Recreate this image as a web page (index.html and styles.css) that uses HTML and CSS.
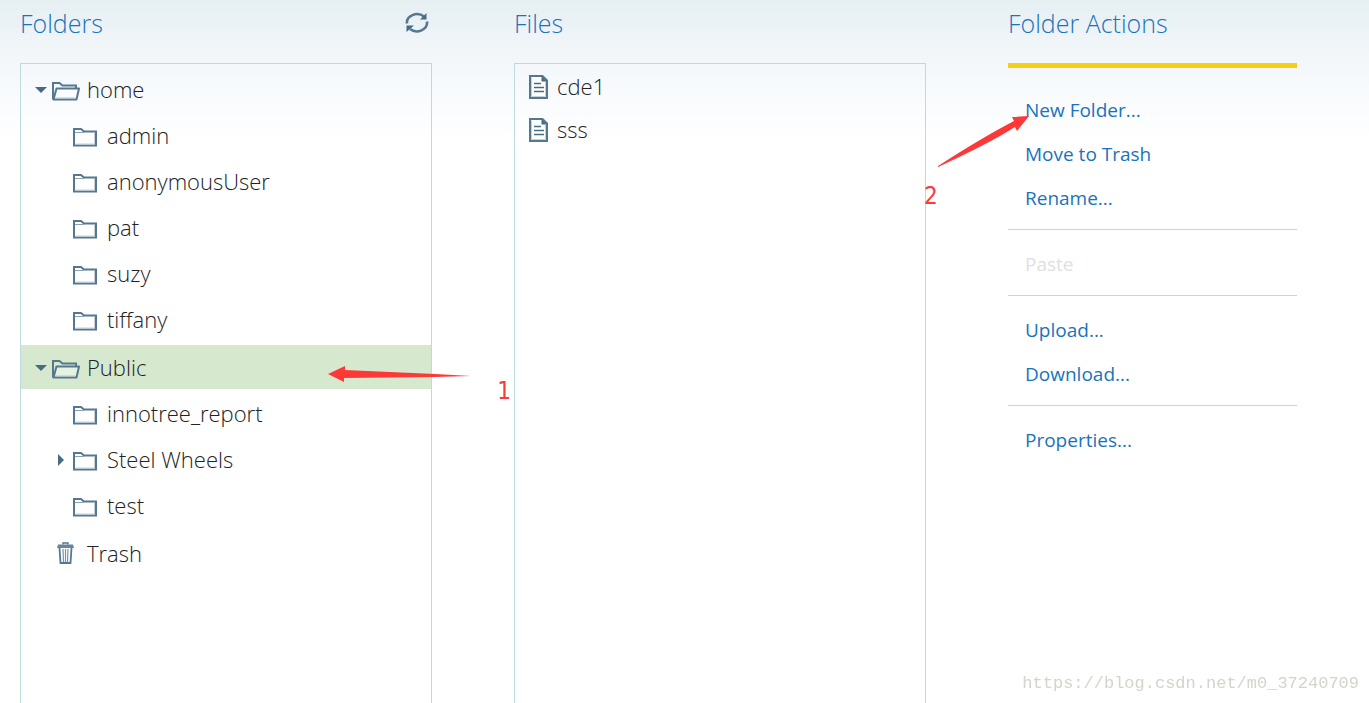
FILE: index.html
```html
<!DOCTYPE html>
<html lang="en">
<head>
    <meta charset="UTF-8">
    <meta name="viewport" content="width=device-width, initial-scale=1.0">
    <title>Browse Files</title>
    <link rel="stylesheet" href="styles.css">
</head>
<body>
    <!-- shared icons -->
    <svg class="icon-defs" width="0" height="0">
        <symbol id="icon-folder" viewBox="0 0 24 20">
            <path d="M1 18.500V2h7l3 2.500h12v14z" fill="#fff" fill-opacity=".8" stroke="#557890" stroke-width="2"/>
            <path d="M2 5.500h9" stroke="#8aa2b3" fill="none"/>
            <path d="M2.500 17h19V6" stroke="#c5d1d9" fill="none"/>
        </symbol>
        <symbol id="icon-open" viewBox="0 0 28 20">
            <path d="M1 18.500V2h6.500l3 2.500H24v3" fill="none" stroke="#557890" stroke-width="2"/>
            <path d="M1.500 18.500L4.500 7.500H27l-2.500 11z" fill="#fff" fill-opacity=".4" stroke="#557890" stroke-width="2" stroke-linejoin="round"/>
            <path d="M3.500 17H23" stroke="#b4c3cd" fill="none"/>
        </symbol>
        <symbol id="icon-file" viewBox="0 0 20 24">
            <path d="M1 1h12.500L18 5.500V23H1z" fill="#fff" stroke="#557890" stroke-width="2"/>
            <path d="M2.500 2.500v19h14V7" fill="none" stroke="#c5d1d9"/>
            <path d="M12.500 1v5.500H18L12.500 1z" fill="#456b85"/>
            <path d="M5 8.500h7M5 12.500h10M5 16.500h10" stroke="#456b85" stroke-width="1.500"/>
        </symbol>
        <symbol id="icon-trash" viewBox="0 0 18 22">
            <path d="M6 2.500V1h5v1.500" fill="none" stroke="#557890" stroke-width="1.500"/>
            <path d="M1 2.500h15l1 3.500H0z" fill="#688599"/>
            <path d="M2.500 6l1 15h10l1-15" fill="none" stroke="#557890" stroke-width="1.800"/>
            <path d="M6 7l.500 13M8.500 7v13M11 7l-.500 13" fill="none" stroke="#7893a5" stroke-width="1.200"/>
        </symbol>
    </svg>

    <main class="browser">
        <section class="column">
            <header class="column-header">
                <h2>Folders</h2>
                <button class="refresh" type="button" aria-label="Refresh">
                    <svg width="24" height="22" viewBox="0 0 24 22">
                        <path d="M2 11.500C1 4 12-1 19 4.500M22 9.500c1 8-10 13-17 7.500" fill="none" stroke="#557890" stroke-width="2.600"/>
                        <path d="M21.500 1v6.500H15zM1.500 20v-6.500H9z" fill="#456b85"/>
                    </svg>
                </button>
            </header>
            <div class="pane folders">
                <ul class="tree">
                    <li>
                        <div class="row">
                            <button class="toggle down" type="button" aria-label="Collapse home"></button>
                            <svg class="open"><use href="#icon-open"/></svg>
                            <span>home</span>
                        </div>
                        <ul>
                            <li class="row"><svg class="folder"><use href="#icon-folder"/></svg><span>admin</span></li>
                            <li class="row"><svg class="folder"><use href="#icon-folder"/></svg><span>anonymousUser</span></li>
                            <li class="row"><svg class="folder"><use href="#icon-folder"/></svg><span>pat</span></li>
                            <li class="row"><svg class="folder"><use href="#icon-folder"/></svg><span>suzy</span></li>
                            <li class="row"><svg class="folder"><use href="#icon-folder"/></svg><span>tiffany</span></li>
                        </ul>
                    </li>
                    <li>
                        <div class="row selected">
                            <button class="toggle down" type="button" aria-label="Collapse Public"></button>
                            <svg class="open"><use href="#icon-open"/></svg>
                            <span>Public</span>
                            <div class="note note-one">
                                <svg width="144" height="18" viewBox="0 0 144 18">
                                    <path d="M0 9L17 1v4l90 4 36 2-36 1-91 1v4z" fill="#fd3838"/>
                                </svg>
                                <span>1</span>
                            </div>
                        </div>
                        <ul>
                            <li class="row"><svg class="folder"><use href="#icon-folder"/></svg><span>innotree_report</span></li>
                            <li class="row">
                                <button class="toggle right" type="button" aria-label="Expand Steel Wheels"></button>
                                <svg class="folder"><use href="#icon-folder"/></svg>
                                <span>Steel Wheels</span>
                            </li>
                            <li class="row"><svg class="folder"><use href="#icon-folder"/></svg><span>test</span></li>
                        </ul>
                    </li>
                    <li class="row"><svg class="trash"><use href="#icon-trash"/></svg><span>Trash</span></li>
                </ul>
            </div>
        </section>

        <section class="column">
            <header class="column-header">
                <h2>Files</h2>
            </header>
            <div class="pane">
                <ul class="files">
                    <li><svg><use href="#icon-file"/></svg><span>cde1</span></li>
                    <li><svg><use href="#icon-file"/></svg><span>sss</span></li>
                </ul>
            </div>
        </section>

        <section class="column">
            <header class="column-header">
                <h2>Folder Actions</h2>
            </header>
            <div class="actions">
                <div class="note note-two">
                    <svg width="92" height="52" viewBox="0 0 92 52">
                        <path d="M91 0L74 1l2 4Q45 21 0 50v1Q52 27 77 11l2 4z" fill="#fd3838"/>
                    </svg>
                    <span>2</span>
                </div>
                <div class="group">
                    <button type="button">New Folder...</button>
                    <button type="button">Move to Trash</button>
                    <button type="button">Rename...</button>
                </div>
                <div class="group">
                    <button type="button" disabled>Paste</button>
                </div>
                <div class="group">
                    <button type="button">Upload...</button>
                    <button type="button">Download...</button>
                </div>
                <div class="group">
                    <button type="button">Properties...</button>
                </div>
            </div>
        </section>
    </main>
    <div class="watermark">https://blog.csdn.net/m0_37240709</div>
</body>
</html>
```

FILE: styles.css
```css
* {
    box-sizing: border-box;
}
body {
    margin: 0;
    font-family: "Open Sans", sans-serif;
    font-weight: 300;
    color: #222;
    background: #fff linear-gradient(#e6eff2, #f3f7fa 60px, #fff 140px) no-repeat;
}
ul {
    list-style: none;
    margin: 0;
    padding: 0;
}
button {
    border: 0;
    padding: 0;
    background: none;
    font-family: inherit;
    cursor: pointer;
}
.icon-defs {
    position: absolute;
}
.browser {
    display: grid;
    grid-template-columns: 412fr 412fr 289fr;
    gap: 82px;
    height: 100vh;
    padding: 0 72px 0 20px;
}
.column {
    display: flex;
    flex-direction: column;
}
.column-header {
    display: flex;
    justify-content: space-between;
    align-items: center;
    height: 45px;
    margin-bottom: 18px;
}
h2 {
    margin: 0;
    font-size: 25px;
    font-weight: 300;
    color: #1973bc;
}
.refresh {
    height: 22px;
    margin-right: 3px;
}
.refresh svg {
    display: block;
}
.pane {
    flex: 1;
    border: 1px solid #bddadf;
    border-bottom: 0;
    font-size: 22px;
}

/* folder tree */
.tree {
    padding-top: 3px;
}
.tree ul {
    padding-bottom: 2px;
}
.row {
    position: relative;
    display: flex;
    align-items: center;
    height: 44px;
    margin-bottom: 2px;
    padding-left: 31px;
}
.tree ul .row {
    padding-left: 52px;
}
.selected {
    background: #d6e9ce;
}
.folder {
    width: 24px;
    height: 20px;
    margin: 3px 10px 0 0;
}
.open {
    width: 28px;
    height: 20px;
    margin: 3px 7px 0 0;
}
.trash {
    width: 18px;
    height: 22px;
    margin: 0 12px 0 5px;
}
.toggle {
    position: absolute;
    border: 6px solid transparent;
}
.down {
    left: 14px;
    top: 20px;
    border-top-color: #456b85;
    border-bottom: 0;
}
.right {
    left: 37px;
    top: 17px;
    border-left-color: #456b85;
    border-right: 0;
}

/* files */
.files {
    padding-left: 14px;
}
.files li {
    display: flex;
    align-items: center;
    height: 43px;
}
.files svg {
    width: 20px;
    height: 24px;
    margin: 2px 8px 0 0;
}

/* actions */
.actions {
    position: relative;
    border-top: 5px solid #f4cf16;
    padding-top: 8px;
}
.group {
    padding: 12px 0 9px;
    border-bottom: 1px solid #bddadf;
}
.group:last-child {
    border-bottom: 0;
}
.group button {
    display: block;
    width: 100%;
    height: 44px;
    padding-left: 17px;
    text-align: left;
    font-size: 19px;
    font-weight: 400;
    color: #1973bc;
}
.group button:disabled {
    color: #e0e0e0;
    cursor: default;
}

/* arrows and step numbers */
.note {
    position: absolute;
    z-index: 1;
    font-family: "DejaVu Sans Condensed", "DejaVu Sans", sans-serif;
    font-size: 24px;
    font-weight: 400;
    line-height: 28px;
    color: #fd3838;
    pointer-events: none;
}
.note svg {
    display: block;
}
.note-one {
    left: 307px;
    top: 20px;
    width: 183px;
}
.note-one span {
    display: block;
    margin-top: -6px;
    text-align: right;
}
.note-two {
    left: -70px;
    top: 48px;
}
.note-two span {
    display: block;
    margin: 14px 0 0 -14px;
}

.watermark {
    position: fixed;
    right: 10px;
    bottom: 10px;
    font-family: "Liberation Mono", monospace;
    font-size: 17px;
    font-weight: 400;
    color: #d4d4cc;
}
```
